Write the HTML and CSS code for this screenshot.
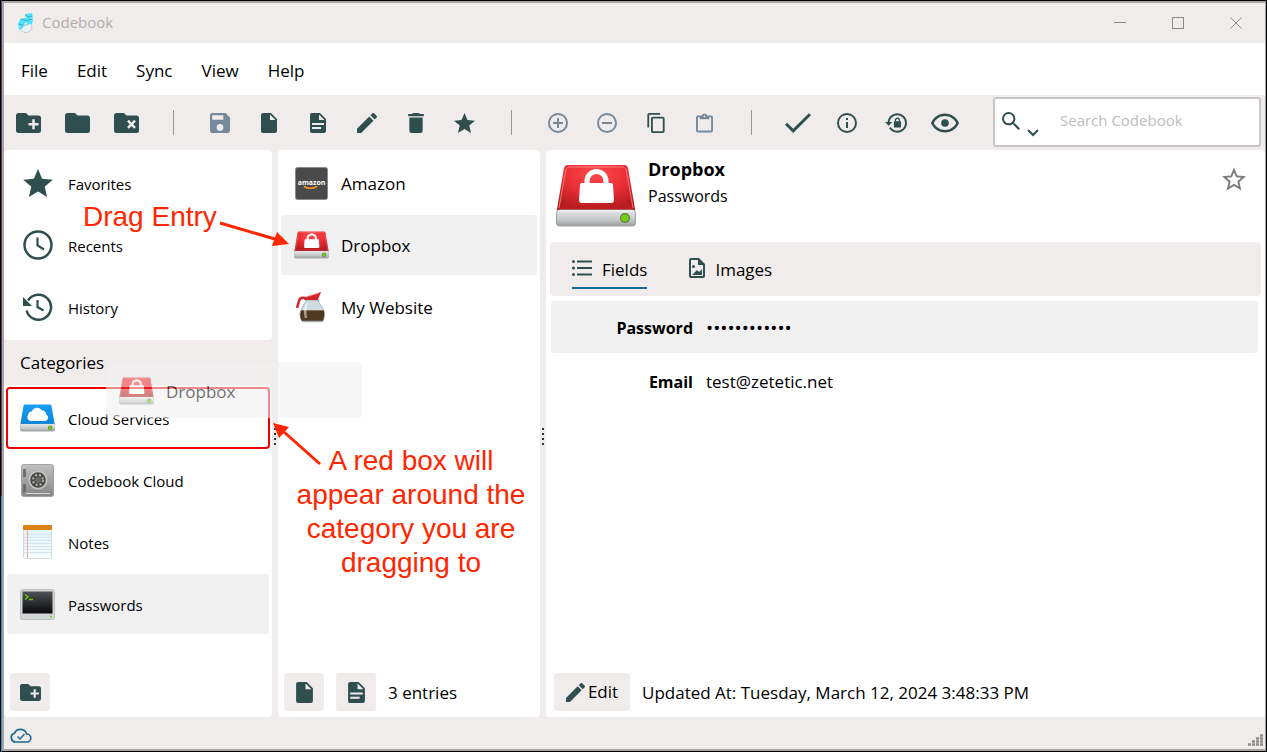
FILE: index.html
```html
<!DOCTYPE html>
<html lang="en">
<head>
  <meta charset="utf-8">
  <title>Codebook</title>
  <link rel="stylesheet" href="styles.css">
</head>
<body>
  <!-- SHARED ICONS -->
  <svg class="sprite" width="0" height="0" aria-hidden="true">
    <defs>
      <radialGradient id="redTop" cx="50%" cy="20%" r="75%">
        <stop offset="0" stop-color="#ff4a4a"/>
        <stop offset="0.5" stop-color="#ec3037"/>
        <stop offset="1" stop-color="#b81c20"/>
      </radialGradient>
      <linearGradient id="blueTop" x1="0" y1="0" x2="0" y2="1">
        <stop offset="0" stop-color="#1a9df2"/>
        <stop offset="1" stop-color="#0785dc"/>
      </linearGradient>
      <linearGradient id="driveFront" x1="0" y1="0" x2="0" y2="1">
        <stop offset="0" stop-color="#e4e6e6"/>
        <stop offset="0.6" stop-color="#c4c8c8"/>
        <stop offset="1" stop-color="#9b9f9f"/>
      </linearGradient>
      <linearGradient id="safeBody" x1="0" y1="0" x2="0" y2="1">
        <stop offset="0" stop-color="#c0c0c0"/>
        <stop offset="1" stop-color="#858585"/>
      </linearGradient>
      <linearGradient id="screen" x1="0" y1="0" x2="0" y2="1">
        <stop offset="0" stop-color="#505255"/>
        <stop offset="1" stop-color="#08080c"/>
      </linearGradient>
      <linearGradient id="paper" x1="0" y1="0" x2="0" y2="1">
        <stop offset="0" stop-color="#dff2f5"/>
        <stop offset="1" stop-color="#f6fbfb"/>
      </linearGradient>
    </defs>

    <symbol id="folder-plus" viewBox="2 4 20 16"><path d="M10,4L12,6H20A2,2 0 0,1 22,8V18A2,2 0 0,1 20,20H4C2.89,20 2,19.1 2,18V6C2,4.89 2.89,4 4,4H10M15,9V12H12V14H15V17H17V14H20V12H17V9H15Z"/></symbol>
    <symbol id="file" viewBox="4 2 16 20"><path d="M13,9V3.5L18.5,9M6,2C4.89,2 4,2.89 4,4V20A2,2 0 0,0 6,22H18A2,2 0 0,0 20,20V8L14,2H6Z"/></symbol>
    <symbol id="file-text" viewBox="4 2 16 20"><path d="M13,9H18.5L13,3.5V9M6,2H14L20,8V20A2,2 0 0,1 18,22H6C4.89,22 4,21.1 4,20V4C4,2.89 4.89,2 6,2M15,18V16H6V18H15M18,14V12H6V14H18Z"/></symbol>
    <symbol id="pencil" viewBox="3 3 18 18"><path d="M20.71,7.04C21.1,6.65 21.1,6 20.71,5.63L18.37,3.29C18,2.9 17.35,2.9 16.96,3.29L15.12,5.12L18.87,8.87M3,17.25V21H6.75L17.81,9.93L14.06,6.18L3,17.25Z"/></symbol>
    <symbol id="star" viewBox="2 2 20 19"><path d="M12,17.27L18.18,21L16.54,13.97L22,9.24L14.81,8.62L12,2L9.19,8.62L2,9.24L7.45,13.97L5.82,21L12,17.27Z"/></symbol>

    <symbol id="drive-red" viewBox="0 0 80 64">
      <path d="M11 1H69Q71 1 72 4L79 45V47H1V45L8 4Q9 1 11 1Z" fill="url(#redTop)"/>
      <path d="M3 44L10 5Q11 3 13 3H67Q69 3 70 5L77 44" fill="none" stroke="#ff9a96" stroke-opacity="0.7"/>
      <rect x="0.5" y="46" width="79" height="16" rx="3" fill="url(#driveFront)" stroke="#9ea3a3"/>
      <path d="M2 47H78" stroke="#f5f5f5" stroke-width="1.5"/>
      <circle cx="69" cy="54" r="5" fill="#5f7a3c"/>
      <circle cx="69" cy="54" r="3.8" fill="#74cf12"/>
      <path d="M31 22V17A9.500 9.500 0 0 1 50 17V22" fill="none" stroke="#fff" stroke-width="5"/>
      <path d="M26 19H55Q57 19 57 21L58 36Q58 39 55 39H26Q23 39 23 36L24 21Q24 19 26 19Z" fill="#fff"/>
    </symbol>
    <symbol id="drive-blue" viewBox="0 0 80 64">
      <path d="M11 1H69Q71 1 72 4L79 45V47H1V45L8 4Q9 1 11 1Z" fill="url(#blueTop)"/>
      <rect x="0.5" y="46" width="79" height="16" rx="3" fill="url(#driveFront)" stroke="#9ea3a3"/>
      <path d="M2 47H78" stroke="#f5f5f5" stroke-width="1.5"/>
      <circle cx="69" cy="54" r="5" fill="#5f7a3c"/>
      <circle cx="69" cy="54" r="3.8" fill="#74cf12"/>
      <path d="M24 39A9 9 0 0 1 19 24A7 7 0 0 1 27 17A13 13 0 0 1 50 14A10 10 0 0 1 60 24A8 8 0 0 1 57 39Z" fill="#fff"/>
    </symbol>
  </svg>

  <div class="window">
    <!-- TITLE BAR -->
    <header class="titlebar">
      <svg class="logo" width="16" height="20" viewBox="0 0 16 20" aria-hidden="true">
        <ellipse cx="8" cy="14" rx="6" ry="5.500" fill="#e9f2f6" stroke="#a9b4ba" stroke-width="0.6"/>
        <path d="M7 1L14 0L15 4L13 6L15 7L14 11L9 12L9 9L6 11L5 15L1 17L0 11L2 6L8 5Z" fill="#4fe3fb"/>
        <path d="M7 2L10 4L14 3M3 6Q8 9 15 6M1 11Q6 13 9 12" fill="none" stroke="#3c7f90" stroke-width="0.6"/>
      </svg>
      <span class="app-name">Codebook</span>
      <div class="window-buttons">
        <button type="button" aria-label="Minimize"><svg width="12" height="12" viewBox="0 0 12 12"><path d="M0 5.500H12"/></svg></button>
        <button type="button" aria-label="Maximize"><svg width="12" height="12" viewBox="0 0 12 12"><rect x="0.5" y="0.5" width="11" height="11"/></svg></button>
        <button type="button" aria-label="Close"><svg width="12" height="12" viewBox="0 0 12 12"><path d="M0.500 0.500L11.500 11.500M11.500 0.500L0.500 11.500"/></svg></button>
      </div>
    </header>

    <nav class="menu">
      <button type="button">File</button>
      <button type="button">Edit</button>
      <button type="button">Sync</button>
      <button type="button">View</button>
      <button type="button">Help</button>
    </nav>

    <!-- TOOLBAR -->
    <div class="toolbar">
      <button type="button" class="tool" aria-label="New category"><svg width="25" height="20"><use href="#folder-plus"/></svg></button>
      <button type="button" class="tool" aria-label="Edit category"><svg width="25" height="20" viewBox="2 4 20 16"><path d="M10,4H4C2.890,4 2,4.890 2,6V18A2,2 0 0,0 4,20H20A2,2 0 0,0 22,18V8C22,6.890 21.100,6 20,6H12L10,4Z"/></svg></button>
      <button type="button" class="tool" aria-label="Delete category"><svg width="25" height="20" viewBox="2 4 20 16"><path d="M10,4L12,6H20A2,2 0 0,1 22,8V18A2,2 0 0,1 20,20H4C2.89,20 2,19.1 2,18V6C2,4.89 2.89,4 4,4H10M12.46,10.88L14.59,13L12.46,15.12L13.88,16.54L16,14.41L18.12,16.54L19.54,15.12L17.41,13L19.54,10.88L18.12,9.46L16,11.59L13.88,9.46L12.46,10.88Z"/></svg></button>
      <span class="separator"></span>
      <button type="button" class="tool" disabled aria-label="Save"><svg width="20" height="20" viewBox="3 3 18 18"><path d="M15,9H5V5H15M12,19A3,3 0 0,1 9,16A3,3 0 0,1 12,13A3,3 0 0,1 15,16A3,3 0 0,1 12,19M17,3H5C3.89,3 3,3.9 3,5V19A2,2 0 0,0 5,21H19A2,2 0 0,0 21,19V7L17,3Z"/></svg></button>
      <button type="button" class="tool" aria-label="New entry"><svg width="16" height="20"><use href="#file"/></svg></button>
      <button type="button" class="tool" aria-label="New note"><svg width="16" height="20"><use href="#file-text"/></svg></button>
      <button type="button" class="tool" aria-label="Edit entry"><svg width="20" height="20"><use href="#pencil"/></svg></button>
      <button type="button" class="tool" aria-label="Delete entry"><svg width="16" height="20" viewBox="5 3 14 18"><path d="M19,4H15.5L14.5,3H9.5L8.5,4H5V6H19M6,19A2,2 0 0,0 8,21H16A2,2 0 0,0 18,19V7H6V19Z"/></svg></button>
      <button type="button" class="tool" aria-label="Favorite"><svg width="21" height="20"><use href="#star"/></svg></button>
      <span class="separator"></span>
      <button type="button" class="tool" disabled aria-label="Add field"><svg width="20" height="20" viewBox="2 2 20 20"><path d="M12,20C7.59,20 4,16.41 4,12C4,7.59 7.59,4 12,4C16.41,4 20,7.59 20,12C20,16.41 16.41,20 12,20M12,2A10,10 0 0,0 2,12A10,10 0 0,0 12,22A10,10 0 0,0 22,12A10,10 0 0,0 12,2M13,7H11V11H7V13H11V17H13V13H17V11H13V7Z"/></svg></button>
      <button type="button" class="tool" disabled aria-label="Remove field"><svg width="20" height="20" viewBox="2 2 20 20"><path d="M12,20C7.59,20 4,16.41 4,12C4,7.59 7.59,4 12,4C16.41,4 20,7.59 20,12C20,16.41 16.41,20 12,20M12,2A10,10 0 0,0 2,12A10,10 0 0,0 12,22A10,10 0 0,0 22,12A10,10 0 0,0 12,2M7,13H17V11H7"/></svg></button>
      <button type="button" class="tool" aria-label="Copy"><svg width="18" height="20" viewBox="2 1 19 22"><path d="M19,21H8V7H19M19,5H8A2,2 0 0,0 6,7V21A2,2 0 0,0 8,23H19A2,2 0 0,0 21,21V7A2,2 0 0,0 19,5M16,1H4A2,2 0 0,0 2,3V17H4V3H16V1Z"/></svg></button>
      <button type="button" class="tool" disabled aria-label="Paste"><svg width="17" height="20" viewBox="3 1 18 20"><path d="M19,3H14.82C14.4,1.84 13.3,1 12,1C10.7,1 9.6,1.84 9.18,3H5A2,2 0 0,0 3,5V19A2,2 0 0,0 5,21H19A2,2 0 0,0 21,19V5A2,2 0 0,0 19,3M12,3A1,1 0 0,1 13,4A1,1 0 0,1 12,5A1,1 0 0,1 11,4A1,1 0 0,1 12,3M7,7H17V5H19V19H5V5H7V7Z"/></svg></button>
      <span class="separator"></span>
      <button type="button" class="tool" aria-label="Check"><svg width="26" height="20" viewBox="3.500 5.500 17.500 13.500"><path d="M21,7L9,19L3.5,13.5L4.91,12.09L9,16.17L19.59,5.59L21,7Z"/></svg></button>
      <button type="button" class="tool" aria-label="Info"><svg width="20" height="20" viewBox="2 2 20 20"><path d="M11,9H13V7H11M12,20C7.59,20 4,16.41 4,12C4,7.59 7.59,4 12,4C16.41,4 20,7.59 20,12C20,16.41 16.41,20 12,20M12,2A10,10 0 0,0 2,12A10,10 0 0,0 12,22A10,10 0 0,0 22,12A10,10 0 0,0 12,2M11,17H13V11H11V17Z"/></svg></button>
      <button type="button" class="tool" aria-label="Lock"><svg width="22" height="20" viewBox="0 2 22.640 20"><path d="M12.63,2C18.16,2 22.64,6.5 22.64,12C22.64,17.5 18.16,22 12.63,22C9.12,22 6.05,20.18 4.26,17.43L5.84,16.18C7.25,18.47 9.76,20 12.64,20A8,8 0 0,0 20.64,12A8,8 0 0,0 12.64,4C8.56,4 5.2,7.06 4.71,11H7.47L3.73,14.73L0,11H2.69C3.19,5.95 7.45,2 12.63,2M15.59,10.24C16.09,10.25 16.5,10.65 16.5,11.16V15.77C16.5,16.27 16.09,16.69 15.58,16.69H10.05C9.54,16.69 9.13,16.27 9.13,15.77V11.16C9.13,10.65 9.54,10.25 10.04,10.24V9.23C10.04,7.7 11.29,6.46 12.81,6.46C14.34,6.46 15.59,7.7 15.59,9.23V10.24M12.81,7.86C12.06,7.86 11.44,8.47 11.44,9.23V10.24H14.19V9.23C14.19,8.47 13.57,7.86 12.81,7.86Z"/></svg></button>
      <button type="button" class="tool" aria-label="Reveal"><svg width="28" height="20" viewBox="1 4.500 22 15"><path d="M12,9A3,3 0 0,1 15,12A3,3 0 0,1 12,15A3,3 0 0,1 9,12A3,3 0 0,1 12,9M12,4.5C17,4.5 21.27,7.61 23,12C21.27,16.39 17,19.5 12,19.5C7,19.5 2.73,16.39 1,12C2.73,7.61 7,4.5 12,4.5M3.18,12C4.83,15.36 8.24,17.5 12,17.5C15.76,17.5 19.17,15.36 20.82,12C19.17,8.64 15.76,6.5 12,6.5C8.24,6.5 4.83,8.64 3.18,12Z"/></svg></button>
      <div class="search">
        <button type="button" class="search-options" aria-label="Search options">
          <svg width="18" height="18" viewBox="3 3 17.500 17.500"><path d="M9.5,3A6.5,6.5 0 0,1 16,9.5C16,11.11 15.41,12.59 14.44,13.73L14.71,14H15.5L20.5,19L19,20.5L14,15.5V14.71L13.73,14.44C12.59,15.41 11.11,16 9.5,16A6.5,6.5 0 0,1 3,9.5A6.5,6.5 0 0,1 9.5,3M9.5,5C7,5 5,7 5,9.5C5,12 7,14 9.5,14C12,14 14,12 14,9.5C14,7 12,5 9.5,5Z"/></svg>
          <svg class="chevron" width="12" height="8" viewBox="0 0 12 8"><path d="M1 1L6 6L11 1" fill="none" stroke="#2f4f4f" stroke-width="2"/></svg>
        </button>
        <input type="text" placeholder="Search Codebook" aria-label="Search Codebook">
      </div>
    </div>

    <main class="panes">
      <!-- SIDEBAR -->
      <div class="sidebar">
        <ul class="list panel">
          <li><a class="row" href="#"><span class="icon"><svg width="30" height="28"><use href="#star"/></svg></span>Favorites</a></li>
          <li><a class="row" href="#"><span class="icon"><svg width="30" height="30" viewBox="0 0 30 30"><circle cx="15" cy="15" r="13.5" fill="none" stroke="#2f4f4f" stroke-width="2.500"/><path d="M14.500 7.500V15.500L21 19.500" fill="none" stroke="#2f4f4f" stroke-width="2.200"/></svg></span>Recents</a></li>
          <li><a class="row" href="#"><span class="icon"><svg width="30" height="28" viewBox="0 0 30 28"><path d="M3.500 17.500A12.500 12.500 0 1 0 5 7.500" fill="none" stroke="#2f4f4f" stroke-width="2.500"/><path d="M0 4V13H9Z"/><path d="M14.500 7V14L20.500 17.500" fill="none" stroke="#2f4f4f" stroke-width="2.200"/></svg></span>History</a></li>
        </ul>
        <h2 class="list-title">Categories</h2>
        <div class="panel categories">
          <ul class="list">
            <li><a class="row drop-target" href="#"><span class="icon"><svg width="35" height="28"><use href="#drive-blue"/></svg></span>Cloud Services</a></li>
            <li><a class="row" href="#"><span class="icon">
              <svg width="33" height="33" viewBox="0 0 33 33">
                <rect x="0.5" y="0.5" width="32" height="32" rx="2" fill="url(#safeBody)" stroke="#a4a4a4"/>
                <path d="M3.500 5V13M3.500 20V28" stroke="#666" stroke-width="2.500"/>
                <path d="M5 29.500H29" stroke="#d8d8d8"/>
                <circle cx="17" cy="16" r="9.500" fill="#c4c4c4"/>
                <circle cx="17" cy="16" r="7.800" fill="#484a47"/>
                <circle cx="17" cy="16" r="5" fill="none" stroke="#b4b4b0" stroke-width="2" stroke-dasharray="2 2"/>
                <circle cx="17" cy="16" r="3" fill="#686a66"/>
              </svg></span>Codebook Cloud</a></li>
            <li><a class="row" href="#"><span class="icon">
              <svg width="29" height="34" viewBox="0 0 29 34">
                <rect x="0.5" y="0.5" width="28" height="33" rx="1" fill="url(#paper)" stroke="#d3dcdc"/>
                <path d="M1 9.500H28M1 12.500H28M1 15.500H28M1 18.500H28M1 21.500H28M1 24.500H28M1 27.500H28" stroke="#d0e6ec"/>
                <path d="M4.500 5V33" stroke="#f0aaaa"/>
                <rect width="29" height="5" rx="1" fill="#da8213"/>
              </svg></span>Notes</a></li>
            <li><a class="row selected" href="#"><span class="icon">
              <svg width="35" height="31" viewBox="0 0 35 31">
                <rect x="0.5" y="0.5" width="34" height="30" rx="2" fill="#d2d5d5" stroke="#bcc0c0"/>
                <rect x="2.500" y="2.500" width="30" height="22" fill="url(#screen)"/>
                <path d="M5 5.500L8 8L5 10.500M9 10.500H13" fill="none" stroke="#64c60c" stroke-width="1.500"/>
                <circle cx="31" cy="27.500" r="1" fill="#68b822"/>
              </svg></span>Passwords</a></li>
          </ul>
          <div class="pane-footer">
            <button type="button" class="small-button" aria-label="New category"><svg width="21" height="17"><use href="#folder-plus"/></svg></button>
          </div>
        </div>
      </div>

      <div class="splitter"><i></i><i></i><i></i><i></i></div>

      <!-- ENTRIES -->
      <div class="entries panel">
        <ul class="list">
          <li><a class="row" href="#"><span class="icon">
            <svg width="33" height="33" viewBox="0 0 33 33">
              <rect x="0.5" y="0.5" width="32" height="32" rx="2" fill="#4a4a4a" stroke="#8a8a8a"/>
              <text class="amazon" x="16.500" y="18" text-anchor="middle">amazon</text>
              <path d="M9 19.500Q15 23 22 19.500" fill="none" stroke="#f39b1d" stroke-width="1.500"/>
            </svg></span>Amazon</a></li>
          <li><a class="row selected" href="#"><span class="icon"><svg width="35" height="28"><use href="#drive-red"/></svg></span>Dropbox</a></li>
          <li><a class="row" href="#"><span class="icon">
            <svg width="31" height="31" viewBox="0 0 31 31">
              <path d="M10 8H22C23 13 29 16 28.500 23Q28 27 27 29H6Q4 26 4 23C4 16 9 13 10 8Z" fill="#cfdde3" stroke="#8fa0a8" stroke-width="0.8"/>
              <path d="M5 18.500H28Q29 24 27 29H6Q3 25 5 18.500Z" fill="#4f3722"/>
              <path d="M5.500 18.500H27.500" stroke="#8a6c50"/>
              <path d="M11 11Q8 18 10 26" fill="none" stroke="#fff" stroke-opacity="0.5" stroke-width="2.500"/>
              <path d="M8 8L9 5L25 0L23 5L22 8Z" fill="#d42528"/>
              <path d="M9 6Q4 5 3 9L1 16" fill="none" stroke="#d42528" stroke-width="2.500"/>
              <path d="M10 5L23 1" stroke="#fff" stroke-opacity="0.4"/>
              <path d="M6 29.500H27" stroke="#a8b1b4" stroke-width="1.500"/>
            </svg></span>My Website</a></li>
        </ul>
        <div class="pane-footer">
          <button type="button" class="small-button" aria-label="New entry"><svg width="17" height="21"><use href="#file"/></svg></button>
          <button type="button" class="small-button" aria-label="New note"><svg width="17" height="21"><use href="#file-text"/></svg></button>
          <span>3 entries</span>
        </div>
      </div>

      <div class="splitter"><i></i><i></i><i></i><i></i></div>

      <!-- ENTRY DETAIL -->
      <section class="detail panel">
        <div class="entry-header">
          <svg width="80" height="64"><use href="#drive-red"/></svg>
          <div class="entry-name">
            <h1>Dropbox</h1>
            <p>Passwords</p>
          </div>
          <button type="button" class="favorite" aria-label="Favorite"><svg width="24" height="24" viewBox="2 1.500 20 20"><path d="M12,15.39L8.24,17.66L9.23,13.38L5.91,10.5L10.29,10.13L12,6.09L13.71,10.13L18.09,10.5L14.77,13.38L15.76,17.66M22,9.24L14.81,8.63L12,2L9.19,8.63L2,9.24L7.45,13.97L5.82,21L12,17.27L18.18,21L16.54,13.97L22,9.24Z"/></svg></button>
        </div>
        <div class="tabs">
          <button type="button" class="tab active"><svg width="20" height="18" viewBox="0 0 20 18"><path d="M5 2.500H20M5 9H20M5 15.500H20" stroke="#2f4f4f" stroke-width="2"/><circle cx="1.500" cy="2.500" r="1.500"/><circle cx="1.500" cy="9" r="1.500"/><circle cx="1.500" cy="15.500" r="1.500"/></svg>Fields</button>
          <button type="button" class="tab"><svg width="16" height="20" viewBox="4 2 16 20"><path d="M14,2L20,8V20A2,2 0 0,1 18,22H6A2,2 0 0,1 4,20V4A2,2 0 0,1 6,2H14M18,20V9H13V4H6V20H18M17,13V19H7L12,14L14,16M10,10.500A1.500,1.500 0 0,1 8.500,12A1.500,1.500 0 0,1 7,10.500A1.500,1.500 0 0,1 8.500,9A1.500,1.500 0 0,1 10,10.500"/></svg>Images</button>
        </div>
        <dl class="fields">
          <div class="field selected"><dt>Password</dt><dd class="masked">••••••••••••</dd></div>
          <div class="field"><dt>Email</dt><dd>test@zetetic.net</dd></div>
        </dl>
        <div class="pane-footer">
          <button type="button" class="small-button edit-button"><svg width="19" height="19"><use href="#pencil"/></svg>Edit</button>
          <span>Updated At: Tuesday, March 12, 2024 3:48:33 PM</span>
        </div>
      </section>
    </main>

    <footer class="statusbar">
      <svg width="22" height="15" viewBox="0 0 22 15" fill="none" stroke="#1b6a94"><path d="M6 14A4.500 4.500 0 0 1 4.500 5.200A6.500 6.500 0 0 1 16.600 6A4 4 0 0 1 17 14Z" stroke-width="1.700"/><path d="M7.500 8.500L10 11L14.500 6" stroke-width="1.500"/></svg>
      <svg class="grip" width="15" height="12" viewBox="0 0 15 12" stroke="#8c8989" stroke-width="2.500" stroke-dasharray="3 1"><path d="M12 1.500H15M8 4.500H15M4 7.500H15M0 10.500H15"/></svg>
    </footer>
  </div>

  <!-- ENTRY BEING DRAGGED -->
  <div class="drag-ghost"><svg width="35" height="28"><use href="#drive-red"/></svg>Dropbox</div>

  <!-- CALLOUTS -->
  <p class="callout callout-entry">Drag Entry</p>
  <p class="callout callout-box">A red box will appear around the category you are dragging to</p>
  <svg class="arrow arrow-entry" width="70" height="30" viewBox="0 0 70 30"><path d="M1 3L56 19" stroke="#ff2600" stroke-width="3"/><path d="M70 24L53 26L58 12Z" fill="#ff2600"/></svg>
  <svg class="arrow arrow-box" width="50" height="44" viewBox="0 0 50 44"><path d="M47 41L11 9" stroke="#ff2600" stroke-width="3"/><path d="M0 0L16 4L6 15Z" fill="#ff2600"/></svg>
</body>
</html>
```
FILE: styles.css
```css
* {
  box-sizing: border-box;
}
body {
  margin: 0;
  min-height: 100vh;
  padding: 1px 1px 1px 2px;
  display: flex;
  position: relative;
  font-family: "Open Sans", "Noto Sans", sans-serif;
  font-size: 17px;
  line-height: 24px;
  color: #000;
  background: linear-gradient(#5c3b62 66%, #2b8fb8 66%) 1px 0 / 1px 100% no-repeat #000;
}
h1, h2, p, ul, dl, dd {
  margin: 0;
  padding: 0;
}
ul {
  list-style-type: none;
}
svg {
  display: block;
  flex: none;
}
button {
  border: none;
  padding: 0;
  background: none;
  font: inherit;
  color: inherit;
}
.sprite {
  position: absolute;
}
.window {
  flex: 1;
  min-width: 0;
  display: flex;
  flex-direction: column;
  border: 2px solid #a9a4a4;
  border-right-width: 1px;
  background-color: #f0eceb;
}

/* title bar and menu */
.titlebar {
  height: 40px;
  padding-left: 14px;
  display: flex;
  align-items: center;
  gap: 8px;
}
.app-name {
  padding-bottom: 2px;
  font-size: 15px;
  color: #b0adac;
}
.window-buttons {
  margin-left: auto;
  display: flex;
}
.window-buttons button {
  width: 58px;
  height: 40px;
  display: flex;
  align-items: center;
  justify-content: center;
}
.window-buttons svg {
  fill: none;
  stroke: #8c8989;
}
.menu {
  height: 52px;
  padding: 4px 17px 0;
  display: flex;
  align-items: center;
  gap: 29px;
  background-color: #fff;
}

/* toolbar */
.toolbar {
  height: 55px;
  padding-right: 4px;
  display: flex;
  align-items: center;
}
.tool {
  width: 49px;
  height: 48px;
  display: flex;
  align-items: center;
  justify-content: center;
}
.tool svg, .small-button svg, .row svg, .tab svg, .search-options svg {
  fill: #2f4f4f;
}
.tool:disabled svg {
  fill: #778899;
}
.separator {
  width: 1px;
  height: 25px;
  margin: 0 21px 0 22px;
  background-color: #9a9695;
}
.search {
  width: 268px;
  height: 50px;
  margin: 0 0 2px auto;
  padding: 0 7px;
  display: flex;
  align-items: center;
  gap: 21px;
  background-color: #fff;
  border: 2px solid #c9c6c6;
  border-radius: 3px;
}
.search-options {
  display: flex;
  align-items: center;
  gap: 7px;
}
.search-options svg {
  margin-bottom: 2px;
}
.search-options .chevron {
  margin: 22px 0 0;
}
.search input {
  flex: 1;
  min-width: 0;
  border: none;
  outline: none;
  padding: 0 0 4px;
  font: inherit;
  font-size: 15px;
}
.search input::placeholder {
  color: #bdbdbd;
}

/* panes */
.panes {
  flex: 1;
  display: flex;
}
.panel {
  background-color: #fff;
  border-radius: 4px;
}
.sidebar {
  width: 268px;
  display: flex;
  flex-direction: column;
}
.list {
  padding: 3px;
  display: flex;
  flex-direction: column;
  gap: 2px;
}
.row {
  height: 60px;
  padding: 2px 0 0 13px;
  display: flex;
  align-items: center;
  gap: 12px;
  border-radius: 3px;
  color: #000;
  text-decoration: none;
}
.sidebar .row {
  gap: 13px;
  font-size: 15px;
}
.icon {
  width: 35px;
  margin-bottom: 2px;
  display: flex;
  justify-content: center;
}
.selected {
  background-color: #f1f1f1;
}
.drop-target {
  outline: 2px solid #ee0000;
  outline-offset: -1px;
}
.list-title {
  height: 45px;
  padding-left: 16px;
  font-size: 17px;
  font-weight: normal;
  line-height: 46px;
}
.categories, .entries, .detail {
  display: flex;
  flex-direction: column;
}
.categories {
  flex: 1;
}
.entries {
  width: 262px;
}
.amazon {
  font-family: "Open Sans", sans-serif;
  font-size: 7px;
  font-weight: bold;
  fill: #fff;
}
.pane-footer {
  margin-top: auto;
  padding: 6px;
  display: flex;
  align-items: center;
  gap: 12px;
}
.pane-footer span {
  padding-top: 2px;
}
.small-button {
  width: 40px;
  height: 38px;
  display: flex;
  align-items: center;
  justify-content: center;
  background-color: #f0eceb;
  border-radius: 3px;
}
.splitter {
  width: 6px;
  padding-top: 6px;
  display: flex;
  flex-direction: column;
  align-items: center;
  justify-content: center;
  gap: 3px;
}
.splitter i {
  width: 2px;
  height: 2px;
  background-color: #333;
}

/* entry detail */
.detail {
  flex: 1;
  min-width: 0;
}
.entry-header {
  height: 92px;
  padding: 6px 19px 0 10px;
  display: flex;
  gap: 12px;
}
.entry-header > svg {
  margin-top: 8px;
}
.entry-name {
  font-size: 16px;
  line-height: 27px;
}
.entry-name h1 {
  font-size: 18px;
}
.favorite {
  margin: 11px 0 auto auto;
}
.favorite svg {
  fill: #7d7d7d;
}
.tabs {
  height: 54px;
  margin: 0 4px;
  padding: 7px 22px;
  display: flex;
  gap: 42px;
  background-color: #f0eceb;
  border-radius: 4px;
}
.tab {
  padding-top: 4px;
  display: flex;
  align-items: center;
  gap: 10px;
  border-bottom: 2px solid transparent;
}
.tab svg {
  margin-bottom: 4px;
}
.tab.active {
  border-color: #166a96;
}
.fields {
  padding: 5px 7px 0 5px;
  display: flex;
  flex-direction: column;
  gap: 2px;
}
.field {
  height: 52px;
  padding-top: 2px;
  display: grid;
  grid-template-columns: 142px 1fr;
  gap: 13px;
  align-items: center;
  border-radius: 3px;
}
.field dt {
  font-size: 16px;
  font-weight: bold;
  text-align: right;
}
.masked {
  font-size: 19px;
}
.detail .pane-footer {
  padding-left: 8px;
}
.edit-button {
  width: 76px;
  gap: 3px;
}

.statusbar {
  height: 32px;
  padding: 4px 2px 0 6px;
  display: flex;
  align-items: center;
  justify-content: space-between;
}
.grip {
  margin-top: 10px;
}

/* things floating over the window */
.drag-ghost {
  position: absolute;
  left: 106px;
  top: 362px;
  width: 256px;
  height: 56px;
  padding: 4px 0 0 13px;
  display: flex;
  align-items: center;
  gap: 12px;
  border-radius: 3px;
  background-color: #f1f1f1;
  opacity: 0.57;
}
.drag-ghost svg {
  margin-bottom: 2px;
}
.callout {
  position: absolute;
  font-family: "Liberation Sans", Arial, sans-serif;
  font-size: 28px;
  line-height: 34px;
  text-align: center;
  color: #ff2600;
}
.callout-entry {
  left: 83px;
  top: 200px;
}
.callout-box {
  left: 291px;
  top: 444px;
  width: 240px;
}
.arrow {
  position: absolute;
}
.arrow-entry {
  left: 219px;
  top: 220px;
}
.arrow-box {
  left: 273px;
  top: 423px;
}
```
